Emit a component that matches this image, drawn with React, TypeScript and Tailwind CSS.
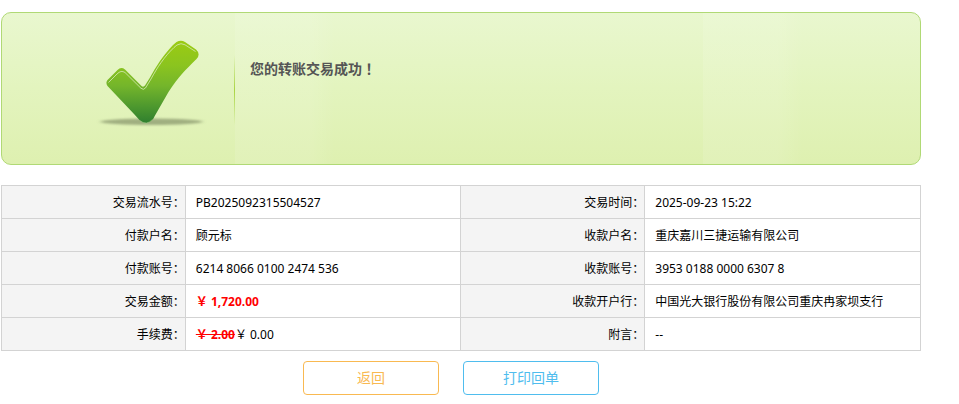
import type { ReactNode } from "react";

type FieldRow = {
  label: string;
  value: ReactNode;
};

const rows: [FieldRow, FieldRow][] = [
  [
    { label: "交易流水号", value: "PB2025092315504527" },
    { label: "交易时间", value: "2025-09-23 15:22" },
  ],
  [
    { label: "付款户名", value: "顾元标" },
    { label: "收款户名", value: "重庆嘉川三捷运输有限公司" },
  ],
  [
    { label: "付款账号", value: "6214 8066 0100 2474 536" },
    { label: "收款账号", value: "3953 0188 0000 6307 8" },
  ],
  [
    {
      label: "交易金额",
      value: <strong className="font-bold text-[#ff0000]">￥ 1,720.00</strong>,
    },
    { label: "收款开户行", value: "中国光大银行股份有限公司重庆冉家坝支行" },
  ],
  [
    {
      label: "手续费",
      value: (
        <>
          <del className="font-bold text-[#ff0000] line-through">￥ 2.00</del>
          <span>￥ 0.00</span>
        </>
      ),
    },
    { label: "附言", value: "--" },
  ],
];

const SuccessIcon = () => (
  <svg width="112" height="92" viewBox="0 0 112 92" aria-hidden="true">
    <defs>
      <linearGradient id="tick" x1="0" y1="0" x2="0" y2="1">
        <stop offset="0" stopColor="#9bcb12" />
        <stop offset="0.3" stopColor="#8bc41f" />
        <stop offset="0.55" stopColor="#74b52b" />
        <stop offset="0.8" stopColor="#4d982e" />
        <stop offset="1" stopColor="#2f7f2f" />
      </linearGradient>
      <filter id="soft" x="-10%" y="-80%" width="120%" height="260%">
        <feGaussianBlur stdDeviation="2 1" />
      </filter>
    </defs>
    <ellipse
      cx="55.5"
      cy="81.7"
      rx="51"
      ry="3.2"
      fill="#84936a"
      fillOpacity="0.7"
      filter="url(#soft)"
    />
    <path
      d="M11.5 46C10 44 10 41.500 12 39.500L21.500 30Q25 26.500 29 29.500L45.500 46Q47.300 47.500 49 45.500L54 37.500C60 26.500 67 15.500 77 5L80.500 2Q85 -0.500 89 2L100 9.500Q105 14 100.500 19C90 29.500 82 37 72.500 52L59 75.500Q56 82.500 50.500 83Q46 83 43 79.500L38 74Z"
      fill="url(#tick)"
    />
    <path
      d="M12.500 42.500L21 34Q25 29.800 29 32.500L45 48.300Q47.500 50.500 49.500 48L55 39C61 28 68 17 78 7.500L81 5Q85 2.500 89 4.800L99.500 11.500"
      fill="none"
      stroke="#d2e8ae"
      strokeOpacity="0.85"
      strokeWidth="1"
    />
    <path
      d="M44 80.700Q50.500 86 56.500 79.500"
      fill="none"
      stroke="#a9cf8b"
      strokeOpacity="0.6"
      strokeWidth="1"
    />
  </svg>
);

const ResultBanner = () => (
  <section className="flex h-[153px] overflow-hidden rounded-[10px] border border-[#b0d975] bg-linear-to-b from-[#e9f7cf] via-[#e3f4be] to-[#def0b0]">
    <div className="flex w-[232px] shrink-0 justify-end pt-[27px] pr-[26px]">
      <SuccessIcon />
    </div>
    <div className="mt-[42px] h-[70px] w-px shrink-0 bg-linear-to-b from-transparent via-[#a9d443] to-transparent" />
    {/* light sheen that repeats across the banner */}
    <div className="flex-1 bg-[repeating-linear-gradient(to_right,rgba(255,255,255,0.1)_0px,rgba(255,255,255,0.1)_75px,transparent_100px,transparent_468px)] pt-[45px] pl-[15px]">
      <h1 className="text-sm leading-5 font-bold text-[#555555]">
        您的转账交易成功
        <span className="font-['Noto_Sans_CJK_TC',sans-serif]">！</span>
      </h1>
    </div>
  </section>
);

const DetailTable = () => (
  <table className="mt-5 w-full table-fixed border-collapse text-xs leading-4 text-black">
    <colgroup>
      <col className="w-1/5" />
      <col className="w-3/10" />
      <col className="w-1/5" />
      <col className="w-3/10" />
    </colgroup>
    <tbody>
      {rows.map((row) => (
        <tr key={row[0].label} className="h-[33px]">
          {row.map(({ label, value }) => [
            <th
              key={label}
              scope="row"
              className="border border-[#d3d3d3] bg-[#f4f4f4] pt-0.5 text-right font-normal"
            >
              {label}：
            </th>,
            <td
              key={`${label}-value`}
              className="border border-[#d3d3d3] pt-0.5 pl-2.5"
            >
              {value}
            </td>,
          ])}
        </tr>
      ))}
    </tbody>
  </table>
);

export default function App() {
  return (
    <main className="bg-white pt-3 pr-[38px] pl-px font-['Noto_Sans','Noto_Sans_CJK_SC',sans-serif]">
      <ResultBanner />
      <DetailTable />
      <div className="mt-2.5 flex justify-center gap-6 pr-5 text-sm">
        <button
          type="button"
          className="h-[34px] w-[136px] rounded-[4px] border border-[#f9b951] text-[#f9b951]"
        >
          返回
        </button>
        <button
          type="button"
          className="h-[34px] w-[136px] rounded-[4px] border border-[#4fbdee] text-[#4fbdee]"
        >
          打印回单
        </button>
      </div>
    </main>
  );
}
